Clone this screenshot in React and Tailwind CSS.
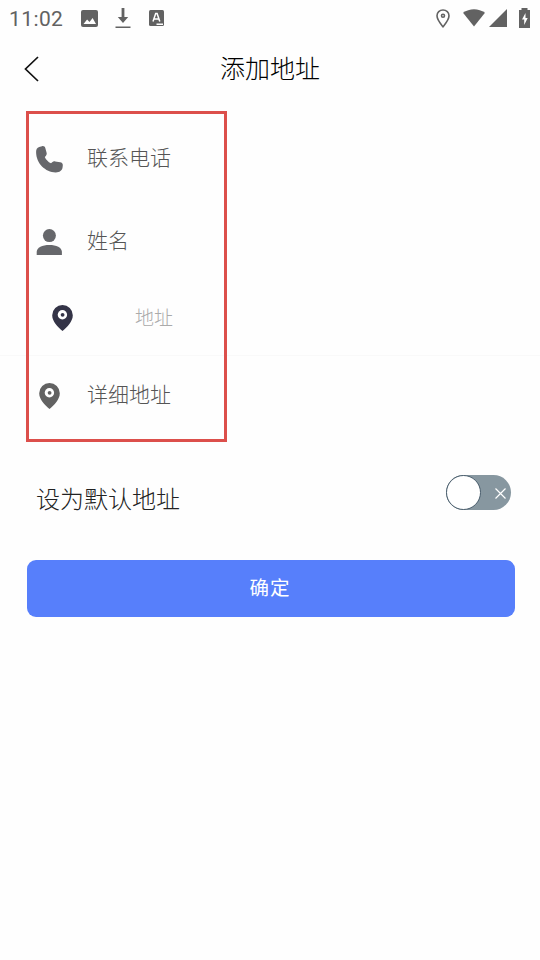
import { useState } from 'react';

function PinIcon({ className }) {
  return (
    <svg viewBox="0 0 21 26" className={`h-[26px] w-[21px] shrink-0 ${className}`} fill="currentColor">
      <path d="M10.5 0A10.3 10.3 0 0 0 .2 10.3c0 3.4 1.5 6 3.4 8.6 2 2.7 4.6 4.9 6.9 7.1 2.3-2.2 4.9-4.4 6.9-7.1 1.9-2.6 3.4-5.2 3.4-8.6A10.3 10.3 0 0 0 10.5 0Z" />
      <circle cx="10.4" cy="9.8" r="4.7" fill="#fff" />
      <circle cx="10.6" cy="9.8" r="1.9" />
    </svg>
  );
}

function PhoneIcon() {
  return (
    <svg viewBox="0 0 27 27" className="mt-[2px] h-[27px] w-[27px] shrink-0 text-[#66676b]" fill="currentColor">
      <path d="M3.2.9 6 .2C7.700-.2 8.800.5 9.300 2l1.300 4.800c.3 1.200.1 2.200-.8 3.100l-1 1c1.100 2.600 3.300 4.900 6.200 6.400l1.200-1.100c.9-.8 1.800-1 3-.8l5 .9c1.800.3 2.700 1.400 2.600 3l-.2 1.900c-.4 3.200-3 5.200-6.800 5.200C9.500 26.500.1 17.500.1 6.100.1 3.300 1 1.500 3.200.9Z" />
    </svg>
  );
}

function UserIcon() {
  return (
    <svg viewBox="0 0 26 26" className="mt-[2px] h-[26px] w-[26px] shrink-0 text-[#66676b]" fill="currentColor">
      <circle cx="13.400" cy="6.600" r="6.500" />
      <path d="M.7 26v-3.200c0-4.200 5.600-6.900 12.600-6.900s12.600 2.700 12.600 6.900V26Z" />
    </svg>
  );
}

function StatusBar() {
  return (
    <div className="flex h-9 items-center justify-between pr-[10px] pl-[9px] text-[#626262]">
      <div className="flex items-center">
        <span className="w-[72px] pt-px font-['Roboto',sans-serif] text-[21px] leading-9 tracking-[0.4px]">11:02</span>
        <svg viewBox="0 0 17 17" className="h-[17px] w-[17px]">
          <rect width="17" height="17" rx="2" fill="currentColor" />
          <path d="m2.500 14 3.600-4.600 2.400 2.700 3.100-4 3.400 5.900Z" fill="#fff" />
        </svg>
        <svg viewBox="0 0 16 20" className="ml-[17px] h-5 w-4" fill="currentColor">
          <path d="M6.600 0h2.800v9h3.800L8 15 2.800 9h3.800ZM.5 18.500h15V20H.5Z" />
        </svg>
        <svg viewBox="0 0 15 16" className="ml-[18px] h-4 w-[15px]">
          <rect width="15" height="16" rx="1.500" fill="currentColor" />
          <path d="m4 11.500 2.700-8h1.400l2.700 8M5 9h4.800M7.500 14.300h6.500" fill="none" stroke="#fff" strokeWidth="1.500" />
        </svg>
      </div>
      <div className="flex items-center">
        <svg viewBox="0 0 14 19" className="h-[19px] w-[14px]" fill="none" stroke="currentColor" strokeWidth="1.600">
          <path d="M7 1C3.600 1 1 3.500 1 6.800c0 4.100 4 8.500 6 11 2-2.500 6-6.900 6-11C13 3.500 10.400 1 7 1Z" />
          <circle cx="7" cy="6.800" r="1.500" />
        </svg>
        <svg viewBox="0 0 22 18" className="ml-[13px] h-[18px] w-[22px]" fill="currentColor">
          <path d="M0 3.800C6.500-1 15.500-1 22 3.800L11 17.500Z" />
        </svg>
        <svg viewBox="0 0 18 18" className="ml-[4px] h-[18px] w-[18px]" fill="currentColor">
          <path d="M18 0v18H0Z" />
        </svg>
        <svg viewBox="0 0 11 20" className="mb-px ml-3 h-5 w-[11px]" fill="currentColor">
          <path d="M2.500 0h6v2H11v18H0V2h2.500Z" />
          <path d="m6.500 5-3.500 6.600h2.200V17l3.500-7H6.500Z" fill="#fff" />
        </svg>
      </div>
    </div>
  );
}

function Switch() {
  const [on, setOn] = useState(false);
  return (
    <button
      role="switch"
      aria-checked={on}
      onClick={() => setOn(!on)}
      className={`flex h-[35px] w-[65px] items-center justify-between rounded-full ${
        on ? 'flex-row-reverse bg-[#577ffb]' : 'bg-[#8797a0]'
      }`}
    >
      <span className="h-[35px] w-[35px] rounded-full border border-[#495d6c] bg-white" />
      <svg viewBox="0 0 11 11" className="mt-[2px] mr-[5px] h-[11px] w-[11px]" stroke="#fff" strokeWidth="1.200">
        <path d="m.5.5 10 10m0-10-10 10" />
      </svg>
    </button>
  );
}

export default function App() {
  return (
    <div className="h-[960px] w-[540px] overflow-hidden bg-[#fefefe] font-['Noto_Sans_CJK_SC',sans-serif]">
      <StatusBar />

      <header className="grid h-[64px] grid-cols-[60px_1fr_60px] items-center">
        <button className="pt-[2px] pl-6" aria-label="返回">
          <svg viewBox="0 0 15 26" className="h-[26px] w-[15px]" fill="none" stroke="#111" strokeWidth="1.700">
            <path d="M14 1 1.500 13 14 25" />
          </svg>
        </button>
        <h1 className="pb-[3px] text-center text-[25px] leading-[36px] font-light text-black">添加地址</h1>
      </header>

      <main className="relative pt-[14px]">
        <div className="flex h-[88px] items-center pl-9 text-[21px] font-light text-[#555]">
          <PhoneIcon />
          <span className="ml-6 pb-[2px]">联系电话</span>
        </div>
        <div className="flex h-[78px] items-center pl-9 text-[21px] font-light text-[#555]">
          <UserIcon />
          <span className="ml-[25px] pb-[2px]">姓名</span>
        </div>
        <div className="flex h-[76px] items-center border-b border-[#f9f9f9] pl-[52px] text-[19px] font-light text-[#aaa]">
          <PinIcon className="text-[#343447]" />
          <span className="ml-[62px]">地址</span>
        </div>
        <div className="flex h-[78px] items-center pl-[39px] text-[21px] font-light text-[#555]">
          <PinIcon className="mt-[2px] text-[#626262]" />
          <span className="ml-[27px] pb-[2px]">详细地址</span>
        </div>

        {/* highlight around the fields */}
        <div className="pointer-events-none absolute top-[11px] left-[26px] h-[331px] w-[201px] border-3 border-[#dc4f4b]" />

        <div className="mt-[41px] flex h-[48px] items-start justify-between pr-[29.500px] pl-9">
          <span className="text-[24px] leading-[46px] font-light text-[#222]">设为默认地址</span>
          <Switch />
        </div>

        <button className="mt-[37px] ml-[27px] block h-[57px] w-[488px] rounded-[9px] bg-[#577ffb] pr-[2px] pb-[3px] text-[19.500px] tracking-[1px] text-white">
          确定
        </button>
      </main>
    </div>
  );
}
